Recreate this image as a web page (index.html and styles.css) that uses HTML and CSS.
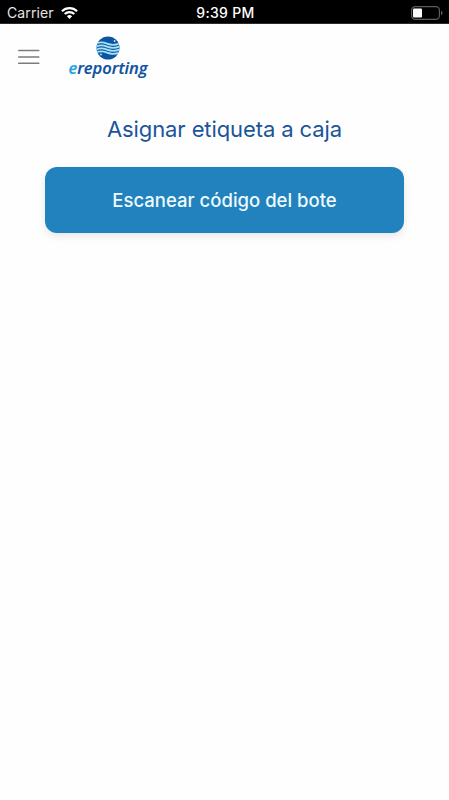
FILE: index.html
```html
<!DOCTYPE html>
<html lang="es">

<head>
  <meta charset="UTF-8">
  <meta name="viewport" content="width=device-width, initial-scale=1">
  <title>eReporting</title>
  <link rel="stylesheet" href="styles.css">
</head>

<body>
  <!-- Barra de estado -->
  <div class="status-bar">
    <div class="carrier">
      <span>Carrier</span>
      <svg class="wifi" viewBox="0 0 17 12" width="17" height="12">
        <path d="M8.5 12 L5.9 9.3 A3.8 3.8 0 0 1 11.1 9.3 Z" fill="#fff"/>
        <path d="M3.7 7.1 A6.9 6.9 0 0 1 13.3 7.1" fill="none" stroke="#fff" stroke-width="2.1"/>
        <path d="M0.9 4.2 A11 11 0 0 1 16.1 4.2" fill="none" stroke="#fff" stroke-width="2.1"/>
      </svg>
    </div>
    <span class="time">9:39 PM</span>
    <svg class="battery" viewBox="0 0 32 14" width="32" height="14">
      <rect x="0.6" y="0.6" width="27.8" height="12.8" rx="3.6" fill="none" stroke="#5c5c5c" stroke-width="1.2"/>
      <rect x="2" y="2.5" width="9" height="9" rx="1" fill="#fff"/>
      <path d="M30 4.8 Q31.6 5.4 31.6 7 Q31.6 8.6 30 9.2 Z" fill="#5c5c5c"/>
    </svg>
  </div>

  <header>
    <button class="menu-btn" aria-label="Menú">
      <svg viewBox="0 0 22 16" width="22" height="16">
        <path d="M0.7 1.5H20.8M0.7 8H20.8M0.7 14.3H20.8" stroke="#7c7c7c" stroke-width="1.5" stroke-linecap="round"/>
      </svg>
    </button>
    <div class="logo">
      <svg viewBox="0 0 24 24" width="24" height="24">
        <defs>
          <clipPath id="globe"><circle cx="12" cy="12" r="11.5"/></clipPath>
        </defs>
        <g clip-path="url(#globe)">
          <rect width="24" height="24" fill="#0c55a2"/>
          <g fill="none" stroke="#a5e3f7" stroke-width="1.7">
            <path d="M0 8 C3 6 7 6 11 7.6 S19 9.4 24 7.2"/>
            <path d="M0 11 C3 9 7 9 11 10.6 S19 12.4 24 10.2"/>
            <path d="M0 14 C3 12 7 12 11 13.6 S19 15.4 24 13.2"/>
            <path d="M0 17 C3 15 7 15 11 16.6 S19 18.4 24 16.2"/>
          </g>
          <circle cx="18.6" cy="5" r="0.9" fill="#c8f0fb"/>
          <circle cx="5" cy="18.4" r="0.9" fill="#c8f0fb"/>
        </g>
      </svg>
      <span class="logo-text"><span class="logo-e">e</span>reporting</span>
    </div>
  </header>

  <main class="container">
    <h1>Asignar etiqueta a caja</h1>
    <button class="scan-btn">Escanear código del bote</button>
  </main>
</body>

</html>
```

FILE: styles.css
```css
* {
  margin: 0;
  padding: 0;
  box-sizing: border-box;
}

body {
  font-family: 'Inter', -apple-system, BlinkMacSystemFont, sans-serif;
  background: #fefefe;
  min-height: 100vh;
}

.status-bar {
  display: grid;
  grid-template-columns: 1fr auto 1fr;
  align-items: center;
  height: 24px;
  padding: 2px 6px 0 8px;
  border-bottom: 1px solid #2b2b2b;
  background: #000;
  color: #fff;
  font-size: 14px;
  line-height: 21px;
}

.carrier {
  display: flex;
  align-items: center;
  gap: 7px;
  margin-left: -1px;
  color: #e4e4e4;
  letter-spacing: 0.1px;
}

.time {
  font-weight: 500;
  letter-spacing: 0.3px;
}

.battery {
  justify-self: end;
}

header {
  display: flex;
  align-items: flex-start;
  height: 68px;
  padding: 12px 18px 0;
}

.menu-btn {
  width: 22px;
  height: 16px;
  margin-top: 13px;
  border: none;
  background: none;
  cursor: pointer;
}

.menu-btn svg {
  display: block;
}

.logo {
  display: flex;
  flex-direction: column;
  align-items: center;
  width: 80px;
  margin-left: 28px;
}

.logo-text {
  font-family: 'Open Sans', sans-serif;
  font-size: 16.5px;
  font-style: italic;
  font-weight: 600;
  line-height: 16px;
  color: #0f519e;
  -webkit-text-stroke: 0.2px;
}

.logo-e {
  color: #1fa3dc;
}

.container {
  padding: 22px 45px 0;
}

h1 {
  font-size: 22px;
  font-weight: 400;
  line-height: 30px;
  letter-spacing: -0.1px;
  text-align: center;
  color: #1b5599;
}

.scan-btn {
  display: block;
  width: 100%;
  height: 66px;
  margin-top: 23px;
  border: none;
  border-radius: 12px;
  background: #2182bd;
  box-shadow: 0 3px 8px rgba(0, 0, 0, 0.1);
  color: #effaff;
  font-family: inherit;
  font-size: 18.5px;
  font-weight: 500;
  cursor: pointer;
}
```
